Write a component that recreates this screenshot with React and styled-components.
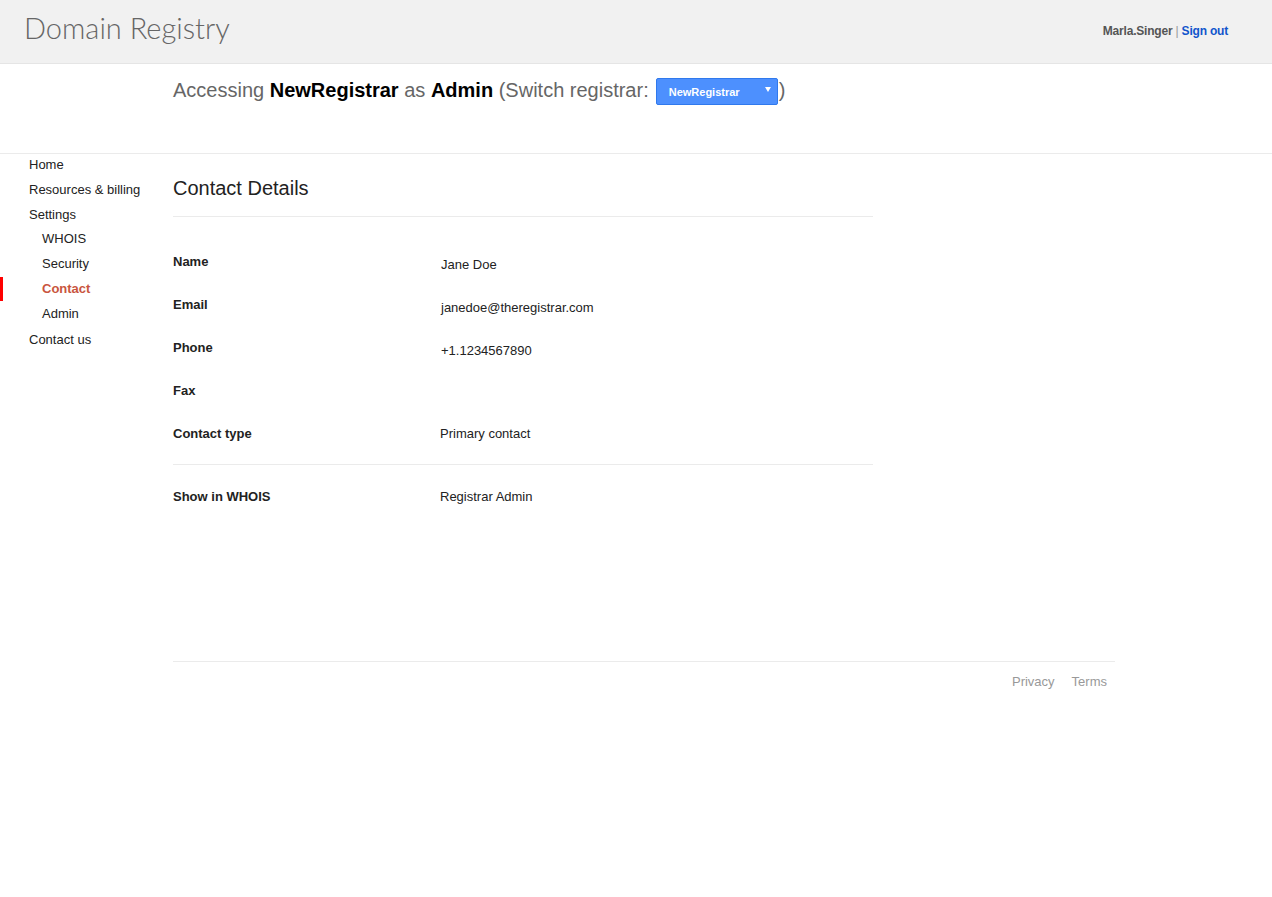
import React from 'react';
import styled, { createGlobalStyle } from 'styled-components';

const GlobalStyle = createGlobalStyle`
  html, body { margin: 0; padding: 0; background: #fff; }
  body { font-family: 'Liberation Sans', Arial, sans-serif; color: #222; }
`;

const nav = [
  { label: 'Home' },
  { label: 'Resources & billing' },
  { label: 'Settings', short: true },
  { label: 'WHOIS', sub: true },
  { label: 'Security', sub: true },
  { label: 'Contact', sub: true, active: true },
  { label: 'Admin', sub: true },
  { label: 'Contact us', gap: true },
];

const rows = [
  { label: 'Name', value: 'Jane Doe', input: true },
  { label: 'Email', value: 'janedoe@theregistrar.com', input: true },
  { label: 'Phone', value: '+1.1234567890', input: true },
  { label: 'Fax', value: '', input: true },
  { label: 'Contact type', value: 'Primary contact' },
];

const App = () => (
  <Page>
    <GlobalStyle />
    <Header>
      <Logo>Domain Registry</Logo>
      <User>
        Marla.Singer <Pipe>|</Pipe> <SignOut href="#">Sign out</SignOut>
      </User>
    </Header>

    <SubHeader>
      <Accessing>
        Accessing <b>NewRegistrar</b> as <b>Admin</b> (Switch registrar:
        <Select>
          NewRegistrar
          <Arrow />
        </Select>
        )
      </Accessing>
    </SubHeader>

    <Body>
      <Sidebar>
        {nav.map((item) => (
          <NavItem
            key={item.label}
            $sub={item.sub}
            $active={item.active}
            $gap={item.gap}
            $short={item.short}
          >
            {item.label}
          </NavItem>
        ))}
      </Sidebar>

      <Main>
        <Title>Contact Details</Title>
        <Rows>
          {rows.map((r) => (
            <Row key={r.label}>
              <Label>{r.label}</Label>
              <Value $input={r.input}>{r.value}</Value>
            </Row>
          ))}
        </Rows>
        <Divider />
        <Row>
          <Label>Show in WHOIS</Label>
          <Value>Registrar Admin</Value>
        </Row>
      </Main>
    </Body>

    <Footer>
      <FooterLink href="#">Privacy</FooterLink>
      <FooterLink href="#">Terms</FooterLink>
    </Footer>
  </Page>
);

export default App;

// Styled Components

const Page = styled.div`
  min-height: 897px;
`;

const Header = styled.header`
  height: 63px;
  background: #f1f1f1;
  border-bottom: 1px solid #e5e5e5;
  display: flex;
  align-items: center;
  justify-content: space-between;
  padding: 0 44px 0 24px;
`;

const Logo = styled.div`
  font-family: 'Lato', sans-serif;
  font-weight: 300;
  font-size: 29px;
  color: #666;
  margin-top: -8px;
`;

const User = styled.div`
  font-size: 12px;
  font-weight: bold;
  color: #555;
  margin-top: -2px;
  letter-spacing: -0.2px;
`;

const Pipe = styled.span`
  font-weight: normal;
  color: #999;
`;

const SignOut = styled.a`
  color: #1155cc;
  text-decoration: none;
`;

const SubHeader = styled.div`
  height: 89px;
  border-bottom: 1px solid #ebebeb;
  padding-left: 173px;
`;

const Accessing = styled.div`
  font-size: 20px;
  color: #666;
  padding-top: 11px;
  display: flex;
  align-items: center;
  white-space: pre;

  b { color: #000; }
`;

const Select = styled.div`
  position: relative;
  display: inline-flex;
  align-items: center;
  width: 122px;
  height: 27px;
  box-sizing: border-box;
  margin: 3px 1px 0 7px;
  padding-left: 12px;
  background: #4d90fe;
  border: 1px solid #3079ed;
  border-radius: 2px;
  color: #fff;
  font-size: 11px;
  font-weight: bold;
`;

const Arrow = styled.span`
  position: absolute;
  right: 6px;
  top: 8px;
  border-left: 3px solid transparent;
  border-right: 3px solid transparent;
  border-top: 5px solid #fff;
`;

const Body = styled.div`
  display: flex;
  min-height: 507px;
`;

const Sidebar = styled.nav`
  width: 173px;
  padding-top: 1px;
  display: flex;
  flex-direction: column;
`;

const NavItem = styled.div`
  position: relative;
  height: ${(p) => (p.$short ? '24px' : '25px')};
  line-height: 20px;
  font-size: 13px;
  padding-left: ${(p) => (p.$sub ? '42px' : '29px')};
  color: ${(p) => (p.$active ? '#c9553e' : '#222')};
  font-weight: ${(p) => (p.$active ? 'bold' : 'normal')};
  margin-top: ${(p) => (p.$gap ? '1px' : '0')};

  &::before {
    content: '';
    display: ${(p) => (p.$active ? 'block' : 'none')};
    position: absolute;
    left: 0;
    top: -2px;
    width: 3px;
    height: 24px;
    background: #f00;
  }
`;

const Main = styled.main`
  width: 700px;
`;

const Title = styled.h1`
  margin: 0;
  padding: 23px 0 16px;
  font-size: 20px;
  font-weight: normal;
  color: #222;
  border-bottom: 1px solid #ebebeb;
`;

const Rows = styled.div`
  padding-top: 37px;
`;

const Row = styled.div`
  display: flex;
  height: 43px;
  font-size: 13px;
`;

const Label = styled.div`
  width: 267px;
  font-weight: bold;
  color: #222;
`;

const Value = styled.div`
  color: #222;
  padding-top: ${(p) => (p.$input ? '3px' : '0')};
  padding-left: ${(p) => (p.$input ? '1px' : '0')};
`;

const Divider = styled.div`
  border-top: 1px solid #ebebeb;
  margin: -5px 0 24px;
`;

const Footer = styled.footer`
  margin-left: 173px;
  width: 942px;
  border-top: 1px solid #ebebeb;
  display: flex;
  justify-content: flex-end;
  gap: 17px;
  padding: 12px 8px 0 0;
  box-sizing: border-box;
`;

const FooterLink = styled.a`
  font-size: 13px;
  color: #999;
  text-decoration: none;
`;
